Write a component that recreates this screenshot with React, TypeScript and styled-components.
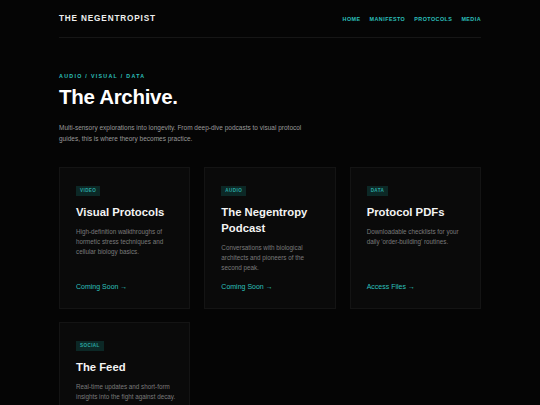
import React from 'react'
import styled, { createGlobalStyle } from 'styled-components'

const Global = createGlobalStyle`
  html, body {
    margin: 0;
    padding: 0;
    background: #050505;
  }
  body {
    font-family: "Liberation Sans", Arial, sans-serif;
    color: #f2f2f2;
    -webkit-font-smoothing: antialiased;
  }
  * { box-sizing: border-box; }
`

const Page = styled.div`
  width: 422px;
  margin: 0 auto;
`

const Header = styled.header`
  display: flex;
  align-items: center;
  justify-content: space-between;
  height: 38px;
  border-bottom: 1px solid #161616;
`

const Brand = styled.div`
  font-size: 8.2px;
  font-weight: 700;
  letter-spacing: 0.85px;
  color: #eeeeee;
`

const Nav = styled.nav`
  display: flex;
  gap: 9px;

  a {
    font-size: 5.4px;
    font-weight: 700;
    letter-spacing: 0.45px;
    color: #2cc0bd;
    text-decoration: none;
  }
`

const Hero = styled.section`
  padding-top: 35px;
  margin-bottom: 23px;
`

const Eyebrow = styled.div`
  font-size: 5.3px;
  font-weight: 700;
  letter-spacing: 1.3px;
  color: #2cc0bd;
`

const Title = styled.h1`
  margin: 6px 0 0;
  font-size: 20.5px;
  font-weight: 700;
  letter-spacing: -0.3px;
  color: #ffffff;
  line-height: 1.2;
`

const Lead = styled.p`
  margin: 12px 0 0;
  max-width: 265px;
  font-size: 6.5px;
  line-height: 11px;
  color: #9a9a9a;
`

const Grid = styled.div`
  display: grid;
  grid-template-columns: repeat(3, 1fr);
  gap: 13px 14px;
`

const Card = styled.article`
  display: flex;
  flex-direction: column;
  min-height: 142px;
  padding: 18px 11px 18px 16px;
  background: #0a0a0a;
  border: 1px solid #141414;
`

const Badge = styled.span`
  align-self: flex-start;
  display: flex;
  align-items: center;
  height: 10px;
  padding: 0 4px;
  font-size: 4.6px;
  font-weight: 700;
  letter-spacing: 0.4px;
  color: #2aa8a4;
  background: #0c2826;
`

const CardTitle = styled.h2`
  margin: 8px 0 0;
  font-size: 11.3px;
  font-weight: 700;
  line-height: 16px;
  color: #f4f4f4;
`

const CardText = styled.p`
  margin: 7px 0 0;
  font-size: 6.3px;
  line-height: 10px;
  color: #7a7a7a;
`

const CardLink = styled.a`
  margin-top: auto;
  font-size: 7px;
  color: #2cc0bd;
  text-decoration: none;
`

const items = [
  {
    tag: 'VIDEO',
    title: 'Visual Protocols',
    text: 'High-definition walkthroughs of hormetic stress techniques and cellular biology basics.',
    link: 'Coming Soon',
  },
  {
    tag: 'AUDIO',
    title: 'The Negentropy Podcast',
    text: 'Conversations with biological architects and pioneers of the second peak.',
    link: 'Coming Soon',
  },
  {
    tag: 'DATA',
    title: 'Protocol PDFs',
    text: "Downloadable checklists for your daily 'order-building' routines.",
    link: 'Access Files',
  },
  {
    tag: 'SOCIAL',
    title: 'The Feed',
    text: 'Real-time updates and short-form insights into the fight against decay.',
    link: 'Follow',
  },
]

export default function App() {
  return (
    <>
      <Global />
      <Page>
        <Header>
          <Brand>THE NEGENTROPIST</Brand>
          <Nav>
            <a href="#">HOME</a>
            <a href="#">MANIFESTO</a>
            <a href="#">PROTOCOLS</a>
            <a href="#">MEDIA</a>
          </Nav>
        </Header>
        <Hero>
          <Eyebrow>AUDIO / VISUAL / DATA</Eyebrow>
          <Title>The Archive.</Title>
          <Lead>
            Multi-sensory explorations into longevity. From deep-dive podcasts to visual protocol
            guides, this is where theory becomes practice.
          </Lead>
        </Hero>
        <Grid>
          {items.map((it) => (
            <Card key={it.title}>
              <Badge>{it.tag}</Badge>
              <CardTitle>{it.title}</CardTitle>
              <CardText>{it.text}</CardText>
              <CardLink href="#">{it.link} →</CardLink>
            </Card>
          ))}
        </Grid>
      </Page>
    </>
  )
}
